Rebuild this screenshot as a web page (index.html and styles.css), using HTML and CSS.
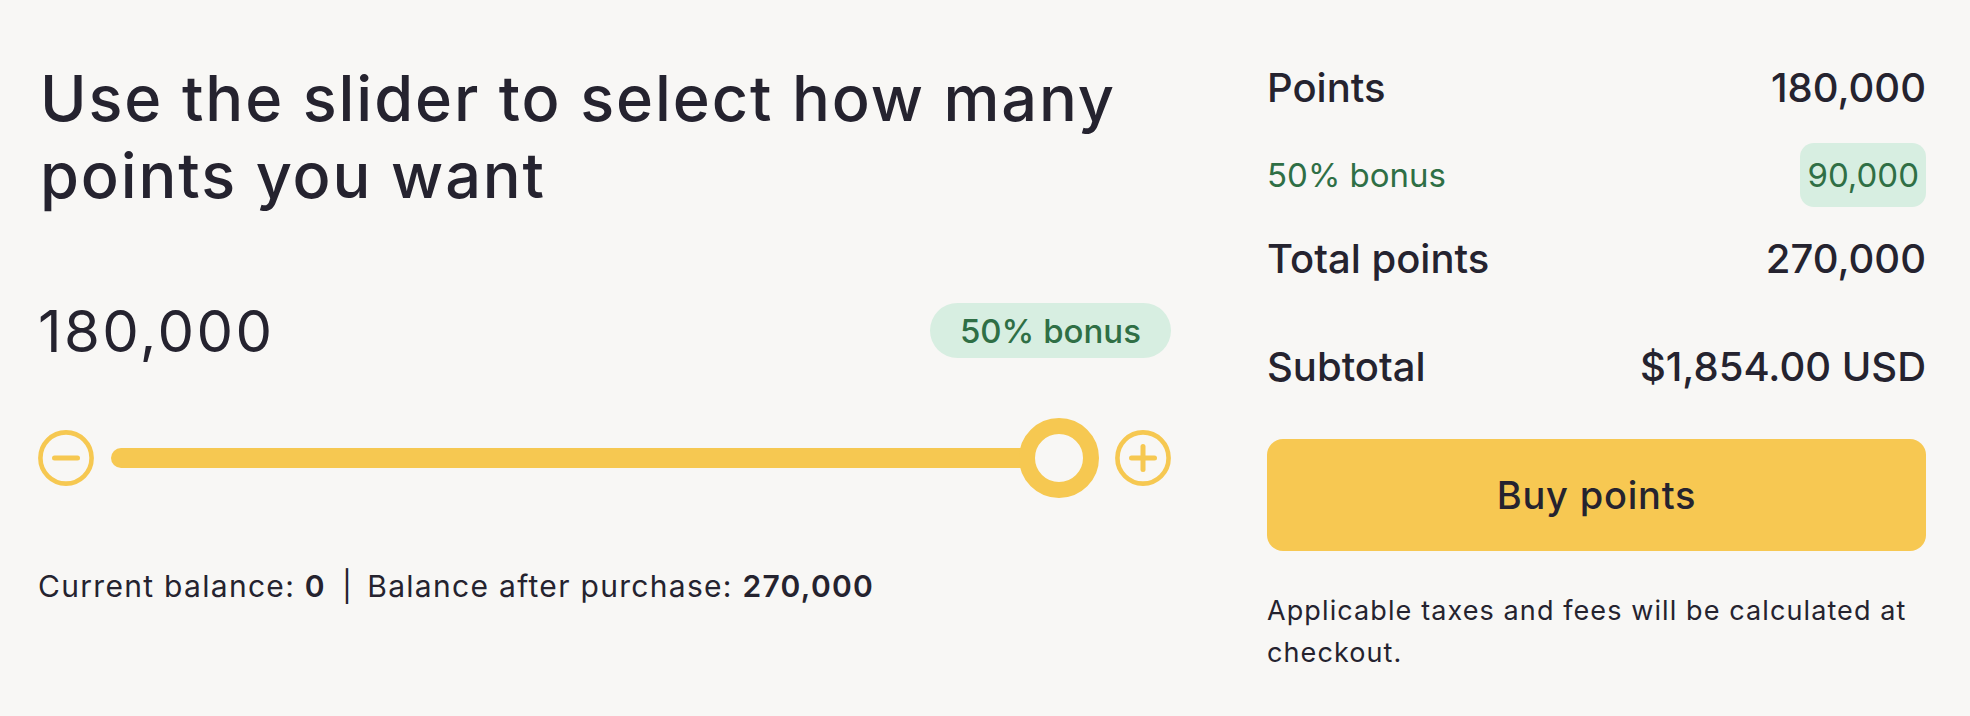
FILE: index.html
```html
<!DOCTYPE html>
<html lang="en">
<head>
<meta charset="utf-8">
<title>Buy points</title>
<link rel="stylesheet" href="styles.css">
</head>
<body>
<main class="page">
  <section class="picker">
    <h1 class="title">Use the slider to select how many points you want</h1>
    <div class="amount-row">
      <span class="amount">180,000</span>
      <span class="badge">50% bonus</span>
    </div>
    <div class="slider">
      <button class="step" aria-label="Decrease">
        <svg viewBox="0 0 56 56" width="56" height="56"><circle cx="28" cy="28" r="25.6" fill="none" stroke="#f6c851" stroke-width="4.6"/><line x1="16.5" y1="28" x2="39.5" y2="28" stroke="#f6c851" stroke-width="5" stroke-linecap="round"/></svg>
      </button>
      <div class="track-wrap">
        <div class="track"></div>
        <div class="thumb"></div>
      </div>
      <button class="step" aria-label="Increase">
        <svg viewBox="0 0 56 56" width="56" height="56"><circle cx="28" cy="28" r="25.6" fill="none" stroke="#f6c851" stroke-width="4.6"/><line x1="16.5" y1="28" x2="39.5" y2="28" stroke="#f6c851" stroke-width="5" stroke-linecap="round"/><line x1="28" y1="16.5" x2="28" y2="39.5" stroke="#f6c851" stroke-width="5" stroke-linecap="round"/></svg>
      </button>
    </div>
    <p class="balance">Current balance: <b>0</b><span class="sep">|</span>Balance after purchase: <b>270,000</b></p>
  </section>
  <aside class="summary">
    <div class="row row-main row-points"><span>Points</span><span>180,000</span></div>
    <div class="row row-bonus"><span>50% bonus</span><span class="pill">90,000</span></div>
    <div class="row row-main row-total"><span>Total points</span><span>270,000</span></div>
    <div class="row row-main row-subtotal"><span>Subtotal</span><span>$1,854.00 USD</span></div>
    <button class="buy">Buy points</button>
    <p class="note">Applicable taxes and fees will be calculated at checkout.</p>
  </aside>
</main>
</body>
</html>
```
FILE: styles.css
```css
* { box-sizing: border-box; }
html, body { margin: 0; padding: 0; }
body {
  background: #f8f7f5;
  color: #25232f;
  font-family: Inter, "Open Sans", Arial, sans-serif;
  width: 1970px;
  height: 716px;
  overflow: hidden;
}
.page {
  display: grid;
  grid-template-columns: 1fr 659px;
  column-gap: 96px;
  padding: 0 44px 0 38px;
}
.picker { display: flex; flex-direction: column; }
.title {
  margin: 60px 0 0;
  font-size: 63px;
  line-height: 77px;
  font-weight: 500;
  letter-spacing: 1.9px;
  padding-left: 2px;
}
.amount-row {
  margin-top: 89px;
  height: 55px;
  display: flex;
  align-items: center;
  justify-content: space-between;
}
.amount {
  font-size: 58px;
  line-height: 58px;
  font-weight: 400;
  letter-spacing: 2.4px;
}
.badge {
  height: 55px;
  display: flex;
  align-items: center;
  padding: 0 30px;
  border-radius: 28px;
  background: #d7eee1;
  color: #2f6f45;
  font-size: 33px;
  font-weight: 500;
}
.slider {
  margin-top: 60px;
  height: 80px;
  display: flex;
  align-items: center;
}
.step {
  width: 56px;
  height: 56px;
  padding: 0;
  border: 0;
  background: none;
  display: block;
}
.step svg { display: block; }
.track-wrap {
  flex: 1;
  margin: 0 16px 0 17px;
  height: 80px;
  position: relative;
  display: flex;
  align-items: center;
}
.track {
  height: 20px;
  width: calc(100% - 40px);
  background: #f6c851;
  border-radius: 10px 0 0 10px;
}
.thumb {
  position: absolute;
  right: 0;
  top: 0;
  width: 80px;
  height: 80px;
  border-radius: 50%;
  border: 16px solid #f6c851;
  background: #f8f7f5;
}
.balance {
  margin: 68px 0 0;
  font-size: 30px;
  line-height: 40px;
  font-weight: 400;
  letter-spacing: 1.3px;
}
.balance b { font-weight: 600; }
.sep { margin: 0 14px 0 16px; }
.summary { display: flex; flex-direction: column; }
.row {
  display: flex;
  justify-content: space-between;
  align-items: center;
}
.row-main {
  font-size: 40px;
  line-height: 48px;
  font-weight: 500;
}
.row-points { margin-top: 64px; }
.row-bonus {
  margin-top: 31px;
  height: 64px;
  font-size: 33px;
  color: #2f6f45;
  font-weight: 400;
}
.pill {
  height: 64px;
  display: flex;
  align-items: center;
  padding: 0 7px;
  border-radius: 14px;
  background: #d7eee1;
}
.row-total { margin-top: 28px; }
.row-subtotal { margin-top: 60px; }
.buy {
  margin-top: 48px;
  height: 112px;
  width: 100%;
  border: 0;
  border-radius: 16px;
  background: #f7c852;
  color: #25232f;
  font-family: inherit;
  font-size: 38px;
  font-weight: 500;
  letter-spacing: 0.8px;
}
.note {
  margin: 39px 0 0;
  font-size: 27px;
  line-height: 42px;
  font-weight: 400;
  letter-spacing: 1.1px;
}
```
